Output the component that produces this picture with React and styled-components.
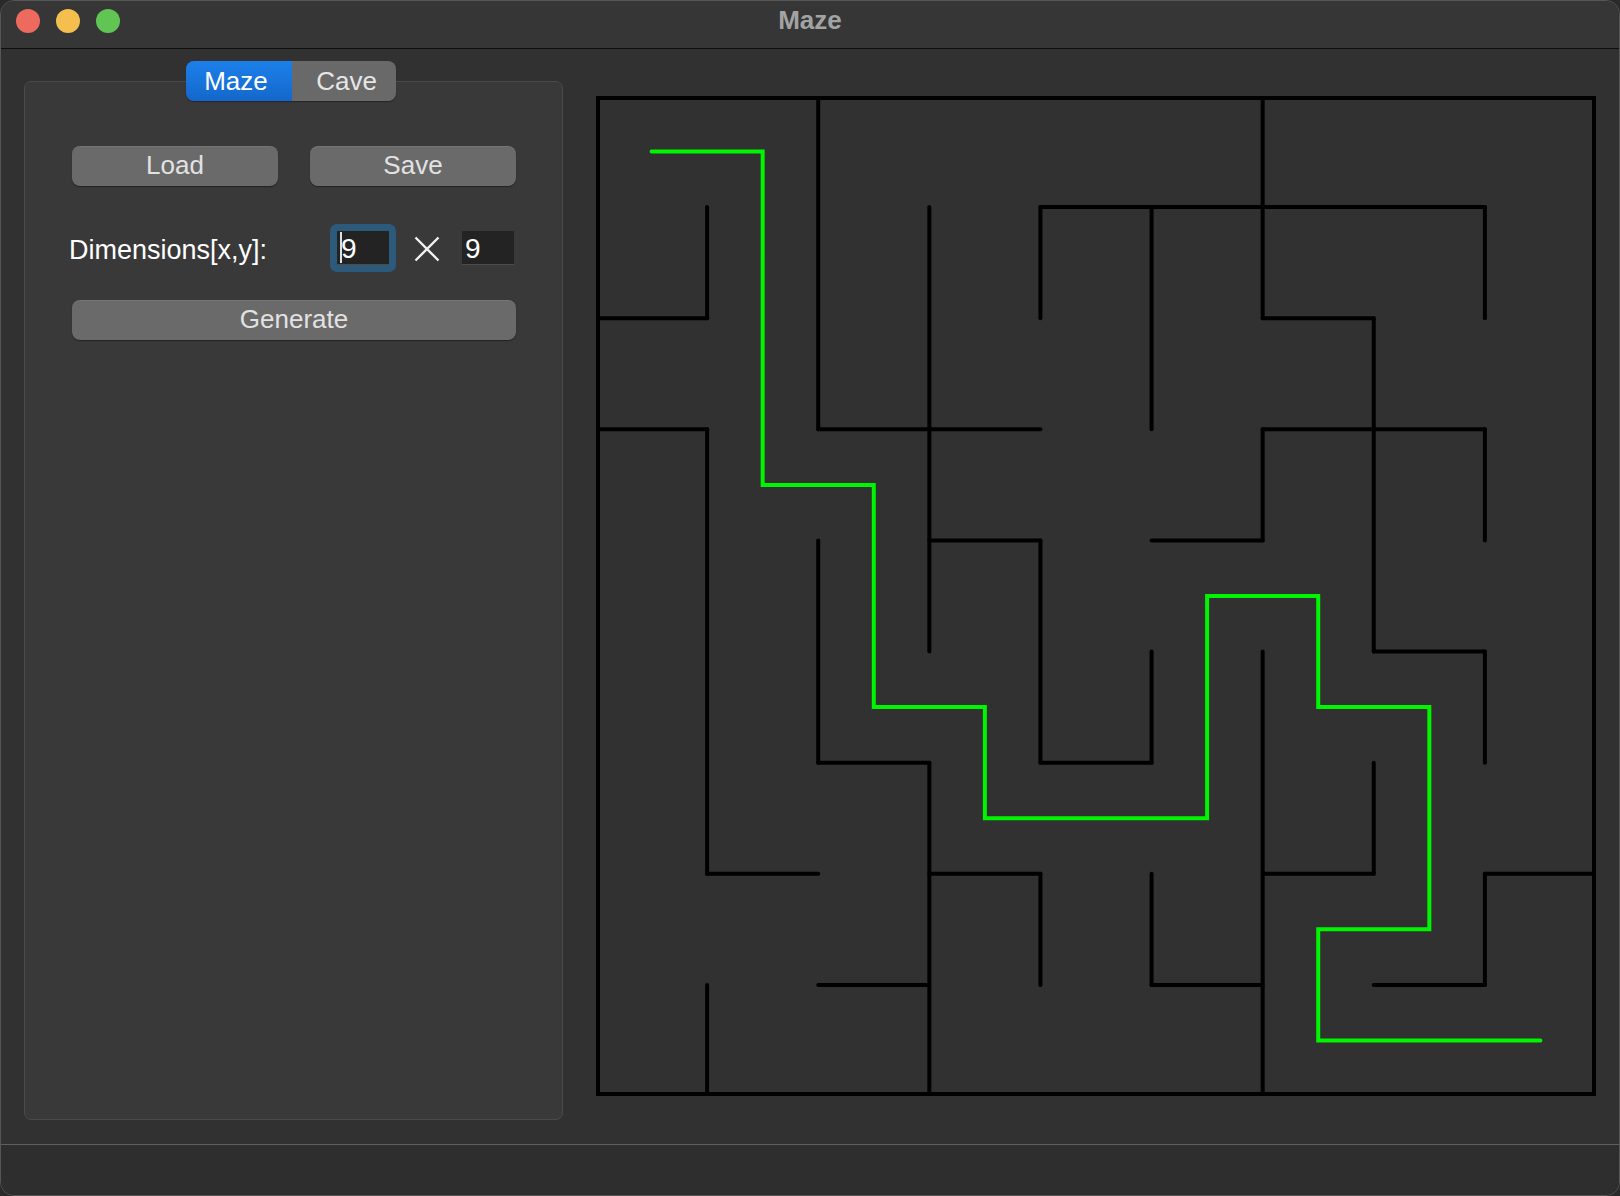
import React from "react";
import styled, { createGlobalStyle } from "styled-components";

const GlobalStyle = createGlobalStyle`
  html, body {
    margin: 0;
    padding: 0;
    background: #2a2a2a;
  }
  body {
    font-family: "Liberation Sans", Arial, sans-serif;
  }
`;

const CELL = 1000 / 9;

// walls: [row, fromCol, toCol]
const hWalls = [
  [1, 4, 8], [2, 0, 1], [2, 6, 7], [3, 0, 1], [3, 2, 4], [3, 6, 8],
  [4, 3, 4], [4, 5, 6], [5, 7, 8], [6, 2, 3], [6, 4, 5], [7, 1, 2],
  [7, 3, 4], [7, 6, 7], [7, 8, 9], [8, 2, 3], [8, 5, 6], [8, 7, 8],
];

// walls: [col, fromRow, toRow]
const vWalls = [
  [1, 1, 2], [1, 3, 7], [1, 8, 9], [2, 0, 3], [2, 4, 6], [3, 1, 5],
  [3, 6, 9], [4, 1, 2], [4, 4, 6], [4, 7, 8], [5, 1, 3], [5, 5, 6],
  [5, 7, 8], [6, 0, 2], [6, 3, 4], [6, 5, 9], [7, 2, 5], [7, 6, 7],
  [8, 1, 2], [8, 3, 4], [8, 5, 6], [8, 7, 8],
];

const solution = [
  [0, 0], [1, 0], [1, 3], [2, 3], [2, 5], [3, 5], [3, 6], [5, 6],
  [5, 4], [6, 4], [6, 5], [7, 5], [7, 7], [6, 7], [6, 8], [8, 8],
];

const MazeCanvas = () => {
  const points = solution
    .map(([c, r]) => `${(c + 0.5) * CELL},${(r + 0.5) * CELL}`)
    .join(" ");
  return (
    <MazeSvg viewBox="0 0 1000 1000" width="1000" height="1000">
      <rect x="2" y="2" width="996" height="996" fill="none" stroke="#000" strokeWidth="4" />
      {hWalls.map(([r, a, b], i) => (
        <line
          key={"h" + i}
          x1={a * CELL}
          y1={r * CELL}
          x2={b * CELL}
          y2={r * CELL}
          stroke="#000"
          strokeWidth="4"
          strokeLinecap="round"
        />
      ))}
      {vWalls.map(([c, a, b], i) => (
        <line
          key={"v" + i}
          x1={c * CELL}
          y1={a * CELL}
          x2={c * CELL}
          y2={b * CELL}
          stroke="#000"
          strokeWidth="4"
          strokeLinecap="round"
        />
      ))}
      <polyline
        points={points}
        fill="none"
        stroke="#00f500"
        strokeWidth="4"
        strokeLinecap="round"
        strokeLinejoin="miter"
      />
    </MazeSvg>
  );
};

const App = () => {
  return (
    <>
      <GlobalStyle />
      <Window>
        <TitleBar>
          <Lights>
            <Light color="#ec6a5e" />
            <Light color="#f4bf4f" />
            <Light color="#61c554" />
          </Lights>
          <Title>Maze</Title>
          <div />
        </TitleBar>

        <Content>
          <GroupBox>
            <TabBar>
              <Tab active>Maze</Tab>
              <Tab>Cave</Tab>
            </TabBar>

            <ButtonRow>
              <Button>Load</Button>
              <Button>Save</Button>
            </ButtonRow>

            <DimRow>
              <Label>Dimensions[x,y]:</Label>
              <FocusRing>
                <NumberBox>
                  <Caret />9
                </NumberBox>
              </FocusRing>
              <Times viewBox="0 0 26 26" width="26" height="26">
                <path d="M1.5 1.5 L24.5 24.5 M24.5 1.5 L1.5 24.5" stroke="#f2f2f2" strokeWidth="2.4" />
              </Times>
              <NumberBox second>9</NumberBox>
            </DimRow>

            <Button wide>Generate</Button>
          </GroupBox>

          <MazeCanvas />
        </Content>

        <StatusBar />
      </Window>
    </>
  );
};

const Window = styled.div`
  width: 1620px;
  height: 1196px;
  box-sizing: border-box;
  display: flex;
  flex-direction: column;
  background: #313131;
  border: 1px solid #565656;
  border-radius: 14px;
  overflow: hidden;
`;

const TitleBar = styled.div`
  height: 47px;
  flex-shrink: 0;
  display: grid;
  grid-template-columns: 1fr auto 1fr;
  align-items: center;
  background: #363636;
  border-bottom: 1px solid #0e0e0e;
`;

const Lights = styled.div`
  display: flex;
  gap: 16px;
  padding-left: 15px;
  margin-top: -8px;
`;

const Light = styled.span`
  width: 24px;
  height: 24px;
  border-radius: 50%;
  background: ${(p) => p.color};
`;

const Title = styled.div`
  font-size: 26px;
  font-weight: bold;
  color: #a3a3a3;
  margin-top: -9px;
`;

const Content = styled.div`
  flex: 1;
  display: flex;
  align-items: flex-start;
  padding-left: 23px;
  background: #313131;
`;

const GroupBox = styled.div`
  width: 539px;
  height: 1039px;
  margin-top: 32px;
  box-sizing: border-box;
  padding: 0 46px 0 47px;
  background: #393939;
  border: 1px solid #4a4a4a;
  border-radius: 7px;
  display: flex;
  flex-direction: column;
`;

const TabBar = styled.div`
  display: flex;
  margin: -21px 0 0 114px;
  height: 40px;
  border-radius: 8px;
  overflow: hidden;
  box-shadow: 0 1px 1px rgba(0, 0, 0, 0.35);
  align-self: flex-start;
`;

const Tab = styled.div`
  width: ${(p) => (p.active ? "106px" : "104px")};
  box-sizing: border-box;
  display: flex;
  align-items: center;
  justify-content: center;
  padding: ${(p) => (p.active ? "0 6px 0 0" : "0 0 0 5px")};
  font-size: 26px;
  color: ${(p) => (p.active ? "#ffffff" : "#e6e6e6")};
  background: ${(p) =>
    p.active ? "linear-gradient(#1c80ea, #1467cb)" : "#696969"};
`;

const ButtonRow = styled.div`
  display: flex;
  gap: 32px;
  margin-top: 45px;
`;

const Button = styled.div`
  flex: ${(p) => (p.wide ? "none" : "1")};
  height: 40px;
  margin-top: ${(p) => (p.wide ? "28px" : "0")};
  box-sizing: border-box;
  display: flex;
  align-items: center;
  justify-content: center;
  padding-bottom: 1px;
  font-size: 26px;
  color: #e2e2e2;
  background: #6a6a6a;
  border-radius: 8px;
  box-shadow: 0 1px 1px rgba(0, 0, 0, 0.4), inset 0 1px 0 rgba(255, 255, 255, 0.08);
`;

const DimRow = styled.div`
  display: flex;
  align-items: center;
  height: 48px;
  margin-top: 38px;
`;

const Label = styled.div`
  width: 258px;
  margin-left: -3px;
  margin-right: 3px;
  flex-shrink: 0;
  padding-top: 5px;
  font-size: 27px;
  color: #ffffff;
`;

const FocusRing = styled.div`
  padding: 7px;
  border-radius: 7px;
  background: #2d5a7b;
`;

const NumberBox = styled.div`
  width: 52px;
  height: 34px;
  box-sizing: border-box;
  margin-left: ${(p) => (p.second ? "22px" : "0")};
  padding: 3px 0 0 3px;
  display: flex;
  align-items: center;
  font-size: 28px;
  color: #ffffff;
  background: #232323;
  border-bottom: 1px solid #4c4c4c;
`;

const Caret = styled.span`
  width: 2px;
  height: 31px;
  margin: -3px -1px 0 0;
  background: #e0e0e0;
`;

const Times = styled.svg`
  margin: 2px 0 0 18px;
  flex-shrink: 0;
`;

const MazeSvg = styled.svg`
  display: block;
  margin: 47px 0 0 33px;
  flex-shrink: 0;
`;

const StatusBar = styled.div`
  height: 50px;
  flex-shrink: 0;
  background: #2e2e2e;
  border-top: 1px solid #5e5e5e;
`;

export default App;
